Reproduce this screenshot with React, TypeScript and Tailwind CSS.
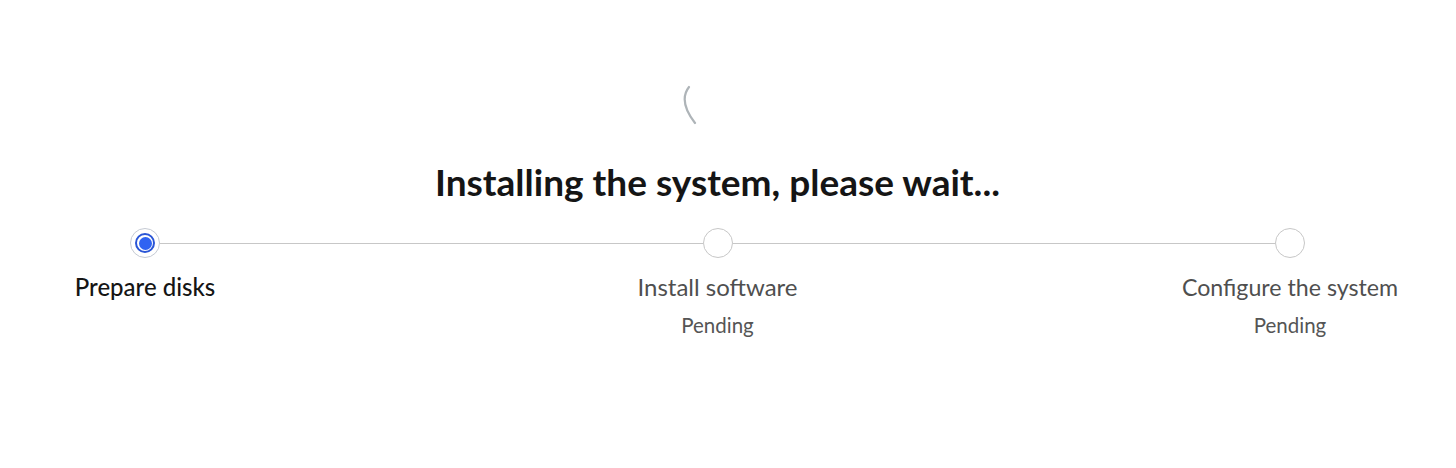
import React from "react";

const font = { fontFamily: "Lato, 'Noto Sans', sans-serif" };

function Circle({ active }: { active?: boolean }) {
  if (active) {
    return (
      <div className="w-[30px] h-[30px] rounded-full border border-[#c5cad3] bg-white flex items-center justify-center shrink-0">
        <div className="w-[20px] h-[20px] rounded-full border-2 border-[#2a55d6] bg-white flex items-center justify-center">
          <div className="w-[13px] h-[13px] rounded-full bg-[#2f63f2]" />
        </div>
      </div>
    );
  }
  return <div className="w-[30px] h-[30px] rounded-full border border-[#c7c7c7] bg-white shrink-0" />;
}

export default function App() {
  const steps = [
    { title: "Prepare disks", active: true },
    { title: "Install software", sub: "Pending" },
    { title: "Configure the system", sub: "Pending" },
  ];
  return (
    <div className="w-full h-[468px] bg-white overflow-hidden" style={font}>
      <div className="w-[1435px] flex flex-col items-center">
        <svg width="80" height="60" viewBox="0 0 80 60" className="mt-[75px]">
          <path d="M11 12 Q0 26 17 48" fill="none" stroke="#aeb4b8" strokeWidth="2.2" strokeLinecap="round" />
        </svg>
        <h1 className="mt-[27px] text-[37px] leading-[40px] font-bold text-[#151515]">
          Installing the system, please wait...
        </h1>
        <div className="mt-[26px] w-full flex items-center px-[130px]">
          <Circle active />
          <div className="flex-1 h-px bg-[#c7c7c7]" />
          <Circle />
          <div className="flex-1 h-px bg-[#c7c7c7]" />
          <Circle />
        </div>
        <div className="mt-[15px] w-full flex justify-between">
          {steps.map((s) => (
            <div key={s.title} className="w-[290px] flex flex-col items-center">
              <div
                className={`leading-[28px] ${
                  s.active ? "text-[24px] text-[#151515] font-medium" : "text-[#4f4f4f] " + (s.title.length > 18 ? "text-[23.2px]" : "text-[24px]")
                }`}
              >
                {s.title}
              </div>
              {s.sub && <div className="mt-[12px] text-[20.5px] leading-[24px] text-[#555555]">{s.sub}</div>}
            </div>
          ))}
        </div>
      </div>
    </div>
  );
}
